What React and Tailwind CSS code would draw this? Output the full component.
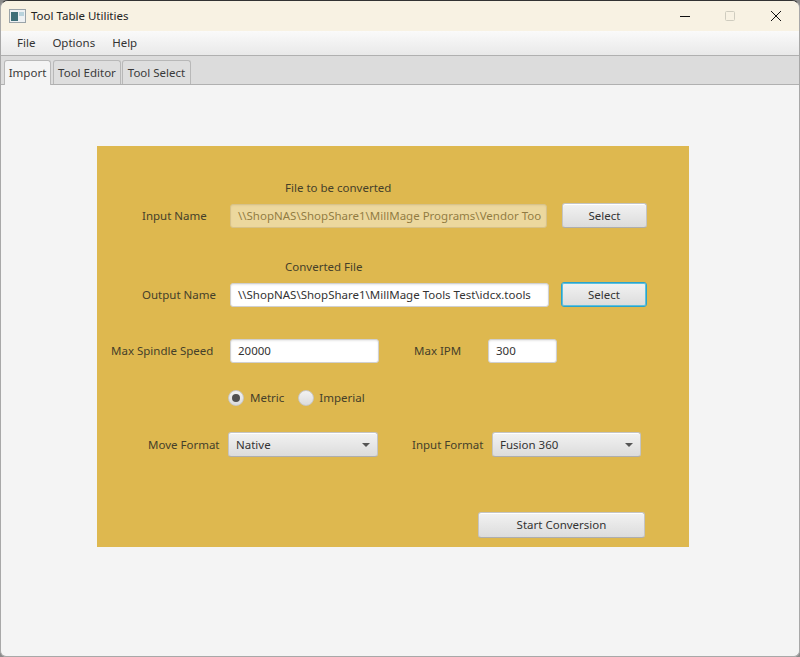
import React from 'react';

const font = "font-['Noto_Sans','Open_Sans',sans-serif]";
const raised = 'rounded-[3px] border border-[#c4c4c4] border-b-[#aeaeae] bg-gradient-to-b from-[#f2f2f2] to-[#dcdcdc] shadow-[inset_0_1px_0_#fff] text-[#333]';
const field = 'flex items-center rounded-[3px] border border-[#d0d0d0] bg-white pl-[7px] text-[11.5px] text-[#333] shadow-[inset_0_1px_2px_#e8e8e8] overflow-hidden whitespace-nowrap';

function Label({ className, children }) {
  return <span className={'text-[11.5px] leading-4 text-[#453f2a] whitespace-nowrap shrink-0 ' + className}>{children}</span>;
}

function Button({ className, children }) {
  return <div className={'flex items-center justify-center text-[11.5px] shrink-0 ' + raised + ' ' + className}>{children}</div>;
}

function Combo({ className, children }) {
  return (
    <div className={'flex items-center justify-between pl-[7px] pr-[7px] text-[11.5px] shrink-0 ' + raised + ' ' + className}>
      <span>{children}</span>
      <span className="h-0 w-0 border-x-[4px] border-t-[4px] border-x-transparent border-t-[#555]" />
    </div>
  );
}

function Radio({ checked }) {
  return (
    <span className="flex h-4 w-4 items-center justify-center rounded-full border border-[#c8c8c8] bg-gradient-to-b from-[#f2f2f2] to-[#dcdcdc] shrink-0">
      {checked && <span className="h-2 w-2 rounded-full bg-[#505050]" />}
    </span>
  );
}

function Tab({ active, className, children }) {
  return (
    <div className={'flex h-[24px] items-center justify-center rounded-t-[3px] border border-b-0 border-[#b8b8b8] text-[11.5px] text-[#3a3a3a] ' + (active ? 'bg-[#f4f4f4] -mb-px h-[25px] ' : 'bg-[#dedede] ') + className}>
      {children}
    </div>
  );
}

export default function App() {
  return (
    <div className={'w-[800px] h-[657px] bg-[#8a8a8a] overflow-hidden ' + font}>
      <div className="flex h-full flex-col rounded-t-[8px] rounded-b-[6px] border border-t-[#333] border-[#a8a8a8] bg-[#f4f4f4] overflow-hidden">
        {/* title bar */}
        <div className="flex h-[30px] items-center bg-[#f8f2e3] shrink-0">
          <svg className="ml-[8px] shrink-0" width="17" height="14" viewBox="0 0 17 14">
            <rect x="0.5" y="0.5" width="16" height="13" fill="#eef1f3" stroke="#9aa3a8" />
            <rect x="2" y="3" width="7" height="9" fill="#3f6f78" />
            <rect x="10" y="3" width="5" height="4" fill="#b9d3dc" />
          </svg>
          <span className="ml-[5px] text-[11.5px] text-[#222]">Tool Table Utilities</span>
          <div className="ml-auto flex items-center">
            <svg width="12" height="12" viewBox="0 0 12 12" className="mr-[33px]"><path d="M1 6.5h10" stroke="#111" strokeWidth="1" /></svg>
            <svg width="12" height="12" viewBox="0 0 12 12" className="mr-[34px]"><rect x="1.5" y="1.5" width="9" height="9" rx="1" fill="none" stroke="#cfccbf" /></svg>
            <svg width="12" height="12" viewBox="0 0 12 12" className="mr-[17px]"><path d="M1 1l10 10M11 1L1 11" stroke="#111" strokeWidth="1" /></svg>
          </div>
        </div>
        {/* menu bar */}
        <div className="flex h-[25px] items-center gap-[17px] border-b border-[#b0b0b0] bg-gradient-to-b from-[#fafafa] to-[#e9e9e9] pl-[16px] text-[11.5px] text-[#333] shrink-0">
          <span>File</span>
          <span>Options</span>
          <span>Help</span>
        </div>
        {/* tabs */}
        <div className="flex h-[29px] items-end gap-[1px] border-b border-[#b0b0b0] bg-[#dcdcdc] pl-[3px] shrink-0">
          <Tab active className="w-[47px] mr-[1px]">Import</Tab>
          <Tab className="w-[68px]">Tool Editor</Tab>
          <Tab className="w-[69px]">Tool Select</Tab>
        </div>
        {/* form panel */}
        <div className="flex-1 pt-[61px] pl-[96px]">
          <div className="flex h-[401px] w-[592px] flex-col bg-[#deb84f]">
            <Label className="ml-[188px] mt-[34px]">File to be converted</Label>
            <div className="mt-[7px] flex items-center pl-[45px]">
              <Label className="w-[88px]">Input Name</Label>
              <div className={field + ' h-[24px] w-[317px] opacity-45'}>\\ShopNAS\ShopShare1\MillMage Programs\Vendor Too</div>
              <Button className="ml-[15px] h-[25px] w-[85px]">Select</Button>
            </div>
            <Label className="ml-[188px] mt-[31px]">Converted File</Label>
            <div className="mt-[7px] flex items-center pl-[45px]">
              <Label className="w-[88px]">Output Name</Label>
              <div className={field + ' h-[24px] w-[319px]'}>\\ShopNAS\ShopShare1\MillMage Tools Test\idcx.tools</div>
              <Button className="ml-[12px] h-[25px] w-[86px] !border-[#2aa3cc] ring-1 ring-inset ring-[#5cc0de]">Select</Button>
            </div>
            <div className="mt-[32px] flex items-center pl-[14px]">
              <Label className="w-[119px]">Max Spindle Speed</Label>
              <div className={field + ' h-[24px] w-[149px]'}>20000</div>
              <Label className="ml-[35px] w-[74px]">Max IPM</Label>
              <div className={field + ' h-[24px] w-[69px]'}>300</div>
            </div>
            <div className="mt-[27px] flex h-4 items-center pl-[131px]">
              <Radio checked />
              <Label className="ml-[6px]">Metric</Label>
              <span className="ml-[14px]"><Radio /></span>
              <Label className="ml-[5px]">Imperial</Label>
            </div>
            <div className="mt-[26px] flex items-center pl-[51px]">
              <Label className="w-[80px]">Move Format</Label>
              <Combo className="h-[25px] w-[150px]">Native</Combo>
              <Label className="ml-[34px] w-[80px]">Input Format</Label>
              <Combo className="h-[25px] w-[149px]">Fusion 360</Combo>
            </div>
            <div className="mt-[55px] pl-[381px]">
              <Button className="h-[26px] w-[167px]">Start Conversion</Button>
            </div>
          </div>
        </div>
      </div>
    </div>
  );
}
